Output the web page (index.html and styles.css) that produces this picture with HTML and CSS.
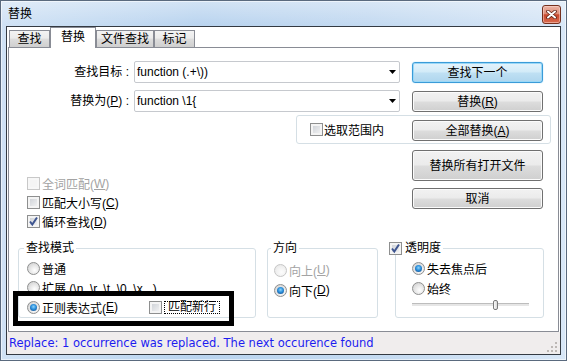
FILE: index.html
```html
<!DOCTYPE html>
<html lang="zh-CN">
<head>
    <meta charset="UTF-8">
    <title>替换</title>
    <link rel="stylesheet" href="styles.css">
</head>
<body>
<div class="window">
    <div class="titlebar">
        <span class="title">替换</span>
        <div class="close">
            <svg width="11" height="9" viewBox="0 0 11 9">
                <path d="M2 1.5 L9 7.5 M9 1.5 L2 7.5" stroke="#5e1f14" stroke-width="3.6" stroke-linecap="round"/>
                <path d="M2 1.5 L9 7.5 M9 1.5 L2 7.5" stroke="#fff" stroke-width="2" stroke-linecap="round"/>
            </svg>
        </div>
    </div>

    <div class="client">
        <!-- tabs -->
        <div class="tabs">
            <div class="tab tab-find">查找</div>
            <div class="tab tab-replace active">替换</div>
            <div class="tab tab-files">文件查找</div>
            <div class="tab tab-mark">标记</div>
        </div>

        <div class="panel">
            <div class="row">
                <span class="field-label">查找目标 :</span>
                <div class="combo">
                    <span class="combo-text">function (.+\))</span>
                    <svg class="arrow" width="7" height="4" viewBox="0 0 7 4"><polygon points="0,0 7,0 3.5,4" fill="#000"/></svg>
                </div>
                <button class="btn btn-default">查找下一个</button>
            </div>

            <div class="row row-second">
                <span class="field-label">替换为(<u>P</u>) :</span>
                <div class="combo">
                    <span class="combo-text">function \1{</span>
                    <svg class="arrow" width="7" height="4" viewBox="0 0 7 4"><polygon points="0,0 7,0 3.5,4" fill="#000"/></svg>
                </div>
                <button class="btn">替换(<u>R</u>)</button>
            </div>

            <div class="selection-box">
                <div class="opt opt-selection"><span class="check"></span>选取范围内</div>
                <button class="btn">全部替换(<u>A</u>)</button>
            </div>

            <div class="middle">
                <div class="options">
                    <div class="opt disabled"><span class="check"></span>全词匹配(<u>W</u>)</div>
                    <div class="opt"><span class="check"></span>匹配大小写(<u>C</u>)</div>
                    <div class="opt">
                        <span class="check checked">
                            <svg width="11" height="11" viewBox="0 0 11 11"><path d="M2 5.5 L4.3 8.5 L9 1.5" fill="none" stroke="#3e5590" stroke-width="2"/></svg>
                        </span>循环查找(<u>D</u>)
                    </div>
                </div>
                <div class="actions">
                    <button class="btn btn-tall">替换所有打开文件</button>
                    <button class="btn">取消</button>
                </div>
            </div>

            <!-- group boxes -->
            <div class="groups">
                <div class="group group-mode">
                    <div class="group-title">查找模式</div>
                    <div class="group-body">
                        <div class="opt"><span class="radio"></span>普通</div>
                        <div class="opt"><span class="radio"></span>扩展 (\n, \r, \t, \0, \x...)</div>
                        <div class="opt opt-last">
                            <span class="regex"><span class="radio on"></span>正则表达式(<u>E</u>)</span>
                            <span class="check"></span><span class="focus">匹配新行</span>
                        </div>
                    </div>
                </div>

                <div class="group group-dir">
                    <div class="group-title">方向</div>
                    <div class="group-body">
                        <div class="opt disabled"><span class="radio"></span>向上(<u>U</u>)</div>
                        <div class="opt"><span class="radio on"></span>向下(<u>D</u>)</div>
                    </div>
                </div>

                <div class="group group-trans">
                    <div class="group-title">
                        <span class="check checked">
                            <svg width="11" height="11" viewBox="0 0 11 11"><path d="M2 5.5 L4.3 8.5 L9 1.5" fill="none" stroke="#3e5590" stroke-width="2"/></svg>
                        </span>透明度
                    </div>
                    <div class="group-body">
                        <div class="opt"><span class="radio on"></span>失去焦点后</div>
                        <div class="opt"><span class="radio"></span>始终</div>
                        <div class="slider"><span class="thumb"></span></div>
                    </div>
                </div>
            </div>
        </div>

        <div class="statusbar">
            <span>Replace: 1 occurrence was replaced. The next occurence found</span>
            <svg class="grip" width="11" height="11" viewBox="0 0 11 11">
                <rect x="8" y="0" width="2" height="2" fill="#bdb8b5"/>
                <rect x="4" y="4" width="2" height="2" fill="#bdb8b5"/>
                <rect x="8" y="4" width="2" height="2" fill="#bdb8b5"/>
                <rect x="0" y="8" width="2" height="2" fill="#bdb8b5"/>
                <rect x="4" y="8" width="2" height="2" fill="#bdb8b5"/>
                <rect x="8" y="8" width="2" height="2" fill="#bdb8b5"/>
            </svg>
        </div>
    </div>

    <div class="annotation"></div>
</div>
</body>
</html>
```

FILE: styles.css
```css
* {
    box-sizing: border-box;
}
body {
    margin: 0;
    font-family: "Liberation Sans", "Noto Sans CJK SC", sans-serif;
    font-size: 12px;
    color: #000;
}
u {
    text-decoration: underline;
}

/* window frame */
.window {
    position: relative;
    width: 567px;
    height: 361px;
    border: 1px solid #5a6a7e;
    padding: 0 5px 5px;
    background:
        linear-gradient(to bottom, rgba(255, 255, 255, 0.35), rgba(255, 255, 255, 0) 24px),
        linear-gradient(90deg, #d0e2f5 0%, #bad4ef 35%, #c4daf1 65%, #d8e7f7 100%);
    box-shadow: inset 0 0 0 1px rgba(255, 255, 255, 0.55);
}
.titlebar {
    display: flex;
    align-items: flex-start;
    height: 25px;
}
.title {
    margin-top: 6px;
    padding-left: 2px;
    line-height: 14px;
}
.close {
    margin-left: auto;
    margin-top: 4px;
    width: 19px;
    height: 19px;
    border: 1px solid #74301f;
    border-radius: 3px;
    background: linear-gradient(#eab5a8 0%, #df8d77 45%, #c9472c 52%, #d86b4f 100%);
    box-shadow: inset 0 0 0 1px rgba(255, 220, 210, 0.5);
    display: flex;
    align-items: center;
    justify-content: center;
}

.client {
    width: 555px;
    height: 329px;
    border: 1px solid #343a42;
    background: #fff;
}

/* tabs */
.tabs {
    display: flex;
    align-items: flex-end;
    height: 20px;
    margin-left: 2px;
}
.tab {
    height: 17px;
    border: 1px solid #898c95;
    border-bottom: 0;
    background: linear-gradient(#f3f3f3 0%, #ebebeb 45%, #dddddd 50%, #cfcfcf 100%);
    text-align: center;
    line-height: 16px;
}
.tab-find { width: 41px; }
.tab-replace { width: 46px; }
.tab-files { width: 58px; }
.tab-mark { width: 41px; }
.tab.active {
    position: relative;
    z-index: 1;
    height: 21px;
    margin-bottom: -1px;
    background: #fff;
    line-height: 18px;
}

.panel {
    width: 551px;
    height: 285px;
    margin-left: 1px;
    border: 1px solid #898c95;
    padding-top: 13px;
}

/* top rows */
.row {
    display: flex;
    align-items: flex-start;
    height: 22px;
}
.row-second {
    margin-top: 7px;
}
.field-label {
    width: 125px;
    padding-right: 5px;
    text-align: right;
    line-height: 22px;
    white-space: nowrap;
}
.combo {
    display: flex;
    align-items: center;
    width: 266px;
    height: 22px;
    border: 1px solid #c6c9ce;
    border-radius: 2px;
    padding-left: 2px;
    background: #fff;
}
.combo-text {
    flex: 1;
    white-space: nowrap;
}
.arrow {
    margin-right: 3px;
}

.btn {
    display: flex;
    align-items: center;
    justify-content: center;
    width: 131px;
    height: 21px;
    padding: 0;
    border: 1px solid #707070;
    border-radius: 3px;
    background: linear-gradient(#f2f2f2 0%, #ebebeb 48%, #dddddd 52%, #cfcfcf 100%);
    box-shadow: inset 0 0 0 1px #fbfbfb;
    font: inherit;
    color: #000;
    line-height: 14px;
}
.row .btn {
    margin-left: 12px;
    margin-top: 1px;
}
.btn-default {
    border-color: #3a9bd8;
    background: linear-gradient(#e4f3fc 0%, #d2ebf8 48%, #bfe0f3 52%, #afd6ee 100%);
    box-shadow: inset 0 0 0 1px #9ad8f7, 0 0 1px #5ec3f2;
}
.btn-tall {
    height: 31px;
}

/* "in selection" box */
.selection-box {
    display: flex;
    align-items: flex-start;
    width: 255px;
    height: 29px;
    margin-top: 3px;
    margin-left: 287px;
    padding: 4px 0 0 13px;
    border: 1px solid #d5dfe5;
    border-radius: 3px;
}
.selection-box .btn {
    margin-left: auto;
    margin-right: 7px;
}
.opt-selection {
    height: 21px;
}
.opt-selection .check {
    margin-right: 1px;
}

/* checkbox rows and buttons */
.middle {
    display: flex;
    height: 87px;
}
.options {
    margin-left: 18px;
    padding-top: 30px;
}
.actions {
    margin-left: auto;
    margin-right: 15px;
}
.actions .btn {
    margin-top: 7px;
}
.actions .btn-tall {
    margin-top: 6px;
}

.opt {
    display: flex;
    align-items: center;
    height: 19px;
    white-space: nowrap;
}
.opt.disabled {
    color: #a3a3a3;
}

.check {
    display: inline-flex;
    align-items: center;
    justify-content: center;
    flex: none;
    width: 13px;
    height: 13px;
    margin-right: 2px;
    border: 1px solid #8e8f8f;
    background: linear-gradient(135deg, #c8ccd2, #f8f8f8);
    box-shadow: inset 0 0 0 2px #f4f4f4;
}
.disabled .check {
    border-color: #c8c8c8;
    background: #f4f4f4;
    box-shadow: inset 0 0 0 2px #f7f7f7;
}
.radio {
    display: inline-flex;
    align-items: center;
    justify-content: center;
    flex: none;
    width: 13px;
    height: 13px;
    margin-right: 2px;
    border: 1px solid #8e8f8f;
    border-radius: 50%;
    background: radial-gradient(circle at 60% 65%, #ffffff 0, #e8e8e8 45%, #c9c9c9 100%);
}
.radio.on::after {
    content: "";
    width: 7px;
    height: 7px;
    border-radius: 50%;
    background: radial-gradient(circle at 50% 40%, #8fd4fa 0, #2a8fdc 45%, #123f7a 100%);
}
.disabled .radio {
    border-color: #c6c6c6;
    background: radial-gradient(circle at 60% 65%, #fdfdfd 0, #f1f1f1 50%, #e2e2e2 100%);
}

/* group boxes */
.groups {
    display: flex;
    margin-top: 17px;
    margin-left: 9px;
}
.group {
    height: 70px;
    border: 1px solid #d5dfe5;
    border-radius: 3px;
}
.group-title {
    display: flex;
    align-items: center;
    width: fit-content;
    height: 14px;
    margin-top: -8px;
    padding: 0 2px;
    background: #fff;
    line-height: 14px;
}
.group-mode {
    width: 238px;
}
.group-mode .group-title {
    margin-left: 5px;
}
.group-mode .group-body {
    padding: 4px 0 0 8px;
}
.group-mode .opt-last {
    height: 20px;
}
.regex {
    display: flex;
    align-items: center;
    width: 122px;
}
.focus {
    height: 13px;
    margin-left: 0;
    padding: 0 3px;
    border: 1px dotted #000;
    line-height: 11px;
}

.group-dir {
    width: 111px;
    margin-left: 11px;
}
.group-dir .group-title {
    margin-left: 3px;
}
.group-dir .group-body {
    padding: 5px 0 0 6px;
}
.group-dir .opt {
    height: 20px;
}

.group-trans {
    width: 149px;
    margin-left: 17px;
}
.group-trans .group-title {
    margin-left: -8px;
    padding-left: 1px;
}
.group-trans .group-title .check {
    margin-right: 3px;
}
.group-trans .group-body {
    padding: 3px 0 0 16px;
}
.group-trans .opt {
    height: 20px;
}
.group-trans .opt .radio {
    margin-right: 2px;
}

.slider {
    display: flex;
    align-items: center;
    width: 117px;
    height: 13px;
    background: linear-gradient(to bottom, transparent 5px, #bdbdbd 5px, #bdbdbd 6px, #e6e6e6 6px, #e6e6e6 8px, transparent 8px);
}
.thumb {
    width: 5px;
    height: 10px;
    margin-left: 81px;
    border: 1px solid #7a7a7a;
    border-radius: 2px;
    background: linear-gradient(to right, #fbfbfb, #d9d9d9);
}

/* status bar */
.statusbar {
    display: flex;
    align-items: center;
    height: 22px;
    padding-left: 2px;
    background: #f0eded;
    font-family: "DejaVu Sans", sans-serif;
    font-size: 11.5px;
    color: #1c1cf0;
    white-space: nowrap;
}
.grip {
    margin-left: auto;
    margin-right: 2px;
    align-self: flex-end;
    margin-bottom: 1px;
}

/* black marker drawn over the dialog */
.annotation {
    position: absolute;
    left: 12px;
    top: 290px;
    width: 221px;
    height: 35px;
    border: 5px solid #000;
    pointer-events: none;
}
```
